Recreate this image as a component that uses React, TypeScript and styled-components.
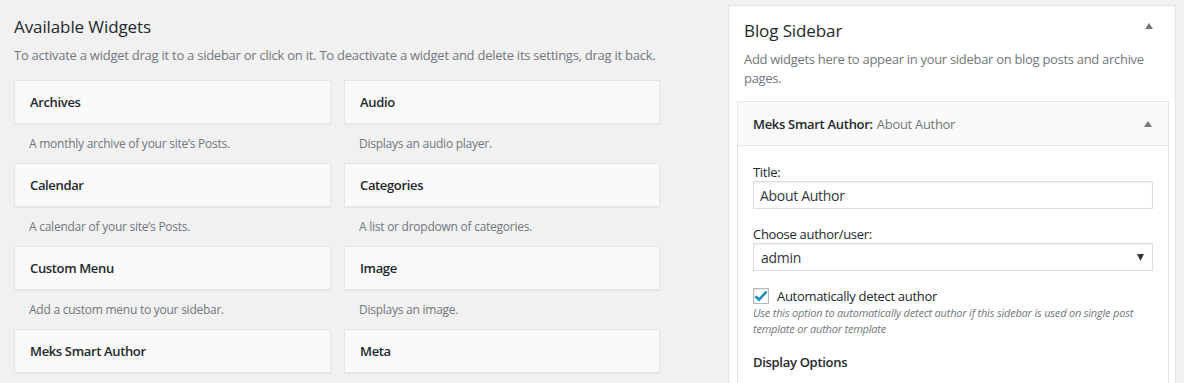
import React from "react";
import styled, { createGlobalStyle } from "styled-components";

const GlobalStyle = createGlobalStyle`
  html, body {
    margin: 0;
    padding: 0;
    background: #f1f1f1;
    font-family: "Open Sans", "Noto Sans", "Liberation Sans", sans-serif;
    color: #23282d;
  }
  * { box-sizing: border-box; }
`;

const Page = styled.div`
  display: flex;
  align-items: flex-start;
  padding-left: 14px;
  width: 1184px;
  height: 383px;
  overflow: hidden;
`;

const LeftColumn = styled.section`
  width: 646px;
  padding-top: 15px;
  margin-right: 68px;
`;

const Heading = styled.h2`
  margin: 0;
  font-size: 17px;
  line-height: 24px;
  font-weight: 400;
  color: #23282d;
  letter-spacing: -0.1px;
`;

const Intro = styled.p`
  margin: 6px 0 15px;
  font-size: 13px;
  line-height: 20px;
  color: #72777c;
  letter-spacing: -0.25px;
`;

const WidgetGrid = styled.div`
  display: grid;
  grid-template-columns: 317px 316px;
  column-gap: 13px;
`;

const WidgetItem = styled.div`
  display: flex;
  flex-direction: column;
`;

const WidgetBox = styled.div`
  height: 44px;
  background: #fafafa;
  border: 1px solid #e5e5e5;
  box-shadow: 0 1px 1px rgba(0, 0, 0, 0.04);
  display: flex;
  align-items: center;
  padding: 0 15px;
  font-size: 13px;
  font-weight: 600;
  color: #23282d;
  letter-spacing: -0.35px;
`;

const WidgetDesc = styled.div`
  height: 39px;
  display: flex;
  align-items: center;
  padding-left: 15px;
  font-size: 12px;
  color: #72777c;
  letter-spacing: -0.25px;
`;

const SidebarPanel = styled.section`
  width: 448px;
  margin-top: 5px;
  height: 400px;
  background: #fff;
  border: 1px solid #e5e5e5;
  box-shadow: 0 1px 1px rgba(0, 0, 0, 0.04);
  padding: 0 6px 0 8px;
`;

const SidebarHeader = styled.div`
  position: relative;
  padding: 13px 7px 0;
`;

const SidebarTitle = styled.h2`
  margin: 0;
  font-size: 17px;
  line-height: 24px;
  font-weight: 400;
  color: #23282d;
  letter-spacing: -0.1px;
`;

const SidebarDesc = styled.p`
  margin: 7px 0 13px;
  font-size: 13px;
  line-height: 19px;
  color: #72777c;
  width: 412px;
  letter-spacing: -0.3px;
`;

const ToggleArrow = styled.span<{ $top: number; $right: number }>`
  position: absolute;
  top: ${(p) => p.$top}px;
  right: ${(p) => p.$right}px;
  width: 8px;
  height: 6px;
  display: block;
  line-height: 0;
`;

const ArrowUp = () => (
  <svg width="8" height="6" viewBox="0 0 8 6">
    <polygon points="4,0 8,6 0,6" fill="#72777c" />
  </svg>
);

const InnerWidget = styled.div`
  border: 1px solid #e5e5e5;
  background: #fff;
`;

const InnerHeader = styled.div`
  position: relative;
  height: 44px;
  background: #fafafa;
  border-bottom: 1px solid #e5e5e5;
  display: flex;
  align-items: center;
  padding: 0 15px;
  font-size: 13px;
  letter-spacing: -0.3px;
`;

const InnerTitleStrong = styled.span`
  font-weight: 600;
  color: #23282d;
`;

const InnerTitleSub = styled.span`
  font-weight: 400;
  color: #72777c;
  margin-left: 4px;
`;

const Form = styled.div`
  padding: 17px 15px 15px;
`;

const Label = styled.label`
  display: block;
  font-size: 13px;
  line-height: 18px;
  color: #23282d;
  letter-spacing: -0.3px;
`;

const TextInput = styled.div`
  height: 28px;
  border: 1px solid #ddd;
  box-shadow: inset 0 1px 2px rgba(0, 0, 0, 0.07);
  display: flex;
  align-items: center;
  padding: 0 6px;
  font-size: 14px;
  color: #32373c;
  margin-bottom: 16px;
  letter-spacing: -0.3px;
`;

const SelectBox = styled(TextInput)`
  justify-content: space-between;
  padding: 0 8px 0 7px;
  margin-bottom: 17px;
`;

const CheckRow = styled.div`
  display: flex;
  align-items: center;
  height: 16px;
  gap: 8px;
  font-size: 13px;
  color: #23282d;
  letter-spacing: -0.3px;
`;

const CheckBox = styled.span`
  width: 16px;
  height: 16px;
  border: 1px solid #b4b9be;
  background: #fff;
  box-shadow: inset 0 1px 2px rgba(0, 0, 0, 0.1);
  display: flex;
  align-items: center;
  justify-content: center;
  flex-shrink: 0;
`;

const HelpText = styled.p`
  margin: 1px 0 0;
  font-size: 11px;
  line-height: 16px;
  font-style: italic;
  color: #72777c;
  width: 395px;
  letter-spacing: -0.2px;
`;

const SectionTitle = styled.h4`
  margin: 15px 0 0;
  font-size: 13px;
  line-height: 20px;
  font-weight: 600;
  color: #23282d;
  letter-spacing: -0.3px;
`;

const widgets = [
  { title: "Archives", desc: "A monthly archive of your site’s Posts." },
  { title: "Audio", desc: "Displays an audio player." },
  { title: "Calendar", desc: "A calendar of your site’s Posts." },
  { title: "Categories", desc: "A list or dropdown of categories." },
  { title: "Custom Menu", desc: "Add a custom menu to your sidebar." },
  { title: "Image", desc: "Displays an image." },
  { title: "Meks Smart Author", desc: "" },
  { title: "Meta", desc: "" },
];

export default function App() {
  return (
    <>
      <GlobalStyle />
      <Page>
        <LeftColumn>
          <Heading>Available Widgets</Heading>
          <Intro>
            To activate a widget drag it to a sidebar or click on it. To deactivate a widget and
            delete its settings, drag it back.
          </Intro>
          <WidgetGrid>
            {widgets.map((w) => (
              <WidgetItem key={w.title}>
                <WidgetBox>{w.title}</WidgetBox>
                <WidgetDesc>{w.desc}</WidgetDesc>
              </WidgetItem>
            ))}
          </WidgetGrid>
        </LeftColumn>
        <SidebarPanel>
          <SidebarHeader>
            <SidebarTitle>Blog Sidebar</SidebarTitle>
            <ToggleArrow $top={17} $right={16}>
              <ArrowUp />
            </ToggleArrow>
            <SidebarDesc>
              Add widgets here to appear in your sidebar on blog posts and archive pages.
            </SidebarDesc>
          </SidebarHeader>
          <InnerWidget>
            <InnerHeader>
              <InnerTitleStrong>Meks Smart Author:</InnerTitleStrong>
              <InnerTitleSub>About Author</InnerTitleSub>
              <ToggleArrow $top={19} $right={16}>
                <ArrowUp />
              </ToggleArrow>
            </InnerHeader>
            <Form>
              <Label>Title:</Label>
              <TextInput>About Author</TextInput>
              <Label>Choose author/user:</Label>
              <SelectBox>
                <span>admin</span>
                <svg width="7" height="7" viewBox="0 0 7 7">
                  <polygon points="0,0 7,0 3.5,7" fill="#32373c" />
                </svg>
              </SelectBox>
              <CheckRow>
                <CheckBox>
                  <svg width="14" height="12" viewBox="0 0 14 12">
                    <path
                      d="M1.5 6.2 L5 9.6 L12.6 1.6"
                      fill="none"
                      stroke="#1e8cbe"
                      strokeWidth="2.6"
                      strokeLinejoin="miter"
                    />
                  </svg>
                </CheckBox>
                <span>Automatically detect author</span>
              </CheckRow>
              <HelpText>
                Use this option to automatically detect author if this sidebar is used on single
                post template or author template
              </HelpText>
              <SectionTitle>Display Options</SectionTitle>
            </Form>
          </InnerWidget>
        </SidebarPanel>
      </Page>
    </>
  );
}
